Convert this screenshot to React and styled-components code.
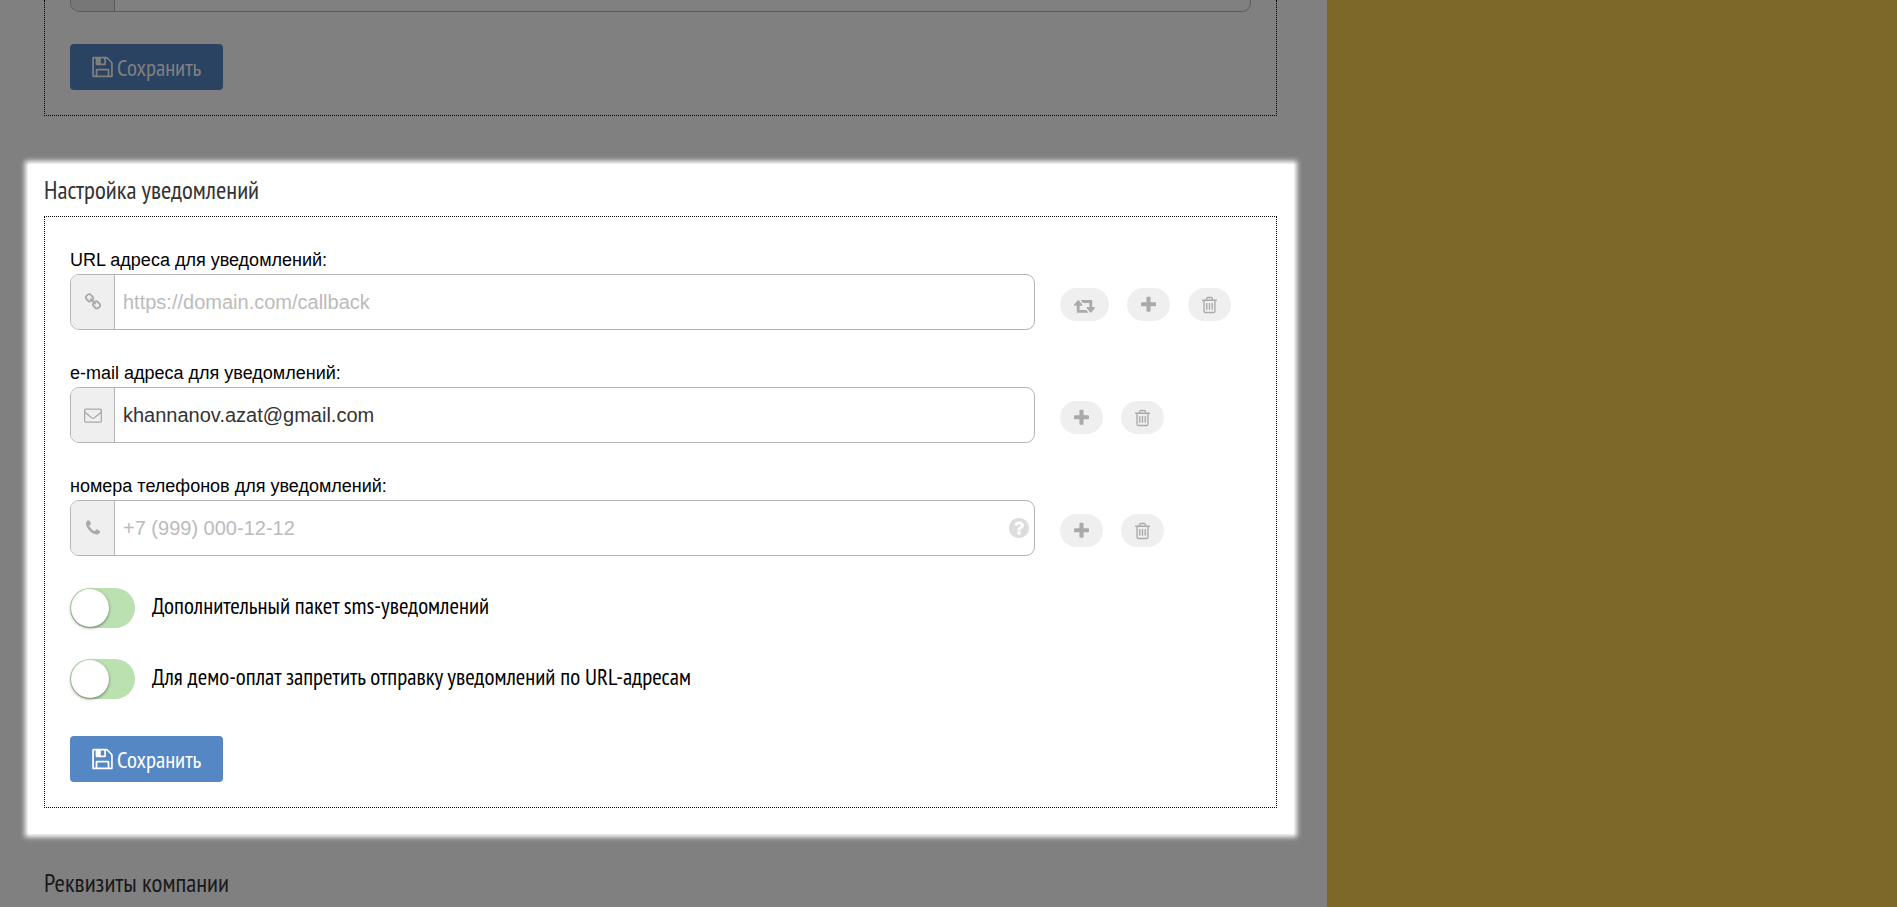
import React, { useState } from 'react'
import styled, { createGlobalStyle } from 'styled-components'

const narrow = "'PT Sans Narrow', 'Liberation Sans Narrow', 'Open Sans', sans-serif"
const regular = "Arial, 'Liberation Sans', sans-serif"

const icons = {
    save: {
        box: '128 0 1536 1792',
        path: 'M512 1536h768v-384h-768v384zm896 0h128v-896q0-14-10-38.5t-20-34.5l-281-281q-10-10-34-20t-39-10v416q0 40-28 68t-68 28h-576q-40 0-68-28t-28-68v-416h-128v1280h128v-416q0-40 28-68t68-28h832q40 0 68 28t28 68v416zm-384-928v-320q0-13-9.5-22.5t-22.5-9.5h-192q-13 0-22.5 9.5t-9.5 22.5v320q0 13 9.5 22.5t22.5 9.5h192q13 0 22.5-9.5t9.5-22.5zm640 32v928q0 40-28 68t-68 28h-1344q-40 0-68-28t-28-68v-1344q0-40 28-68t68-28h928q40 0 88 20t76 48l280 280q28 28 48 76t20 88z',
    },
    link: {
        box: '0 0 1792 1792',
        path: 'M1520 1216q0-40-28-68l-208-208q-28-28-68-28-42 0-72 32 3 3 19 18.5t21.5 21.5 15 19 13 25.5 3.5 27.5q0 40-28 68t-68 28q-15 0-27.5-3.5t-25.5-13-19-15-21.5-21.5-18.5-19q-33 31-33 73 0 40 28 68l206 207q27 27 68 27 40 0 68-26l147-146q28-28 28-67zm-703-705q0-40-28-68l-206-207q-28-28-68-28-39 0-68 27l-147 146q-28 28-28 67 0 40 28 68l208 208q27 27 68 27 42 0 72-31-3-3-19-18.5t-21.5-21.5-15-19-13-25.5-3.5-27.5q0-40 28-68t68-28q15 0 27.5 3.5t25.5 13 19 15 21.5 21.5 18.5 19q33-31 33-73zm895 705q0 120-85 203l-147 146q-83 83-203 83-121 0-204-85l-206-207q-83-83-83-203 0-123 88-209l-88-88q-86 88-208 88-120 0-204-84l-208-208q-84-84-84-204t85-203l147-146q83-83 203-83 121 0 204 85l206 207q83 83 83 203 0 123-88 209l88 88q86-88 208-88 120 0 204 84l208 208q84 84 84 204z',
    },
    mail: {
        box: '0 0 1792 1792',
        path: 'M1664 1504v-768q-32 36-69 66-268 206-426 338-51 43-83 67t-86.5 48.5-102.5 24.5h-2q-48 0-102.5-24.5t-86.5-48.5-83-67q-158-132-426-338-37-30-69-66v768q0 13 9.5 22.5t22.5 9.5h1472q13 0 22.5-9.5t9.5-22.5zm0-1051v-24.5l-.5-13-3-12.5-5.5-9-9-7.5-14-2.5h-1472q-13 0-22.5 9.5t-9.5 22.5q0 168 147 284 193 152 401 317 6 5 35 29.5t46 37.5 44.5 31.5 50.5 27.5 43 9h2q20 0 43-9t50.5-27.5 44.5-31.5 46-37.5 35-29.5q208-165 401-317 54-43 100.5-115.5t46.5-131.5zm128-37v1088q0 66-47 113t-113 47h-1472q-66 0-113-47t-47-113v-1088q0-66 47-113t113-47h1472q66 0 113 47t47 113z',
    },
    phone: {
        box: '0 0 1792 1792',
        path: 'M1600 1240q0 27-10 70.5t-21 68.5q-21 50-122 106-94 51-186 51-27 0-52.5-3.5t-57.5-12.5-47.5-14.5-55.5-20.5-49-18q-98-35-175-83-128-79-264.5-215.5t-215.5-264.5q-48-77-83-175-3-9-18-49t-20.5-55.5-14.5-47.5-12.5-57.5-3.5-52.5q0-92 51-186 56-101 106-122 25-11 68.5-21t70.5-10q14 0 21 3 18 6 53 76 11 19 30 54t35 63.5 31 53.5q3 4 17.5 25t21.5 35.5 7 28.5q0 20-28.5 50t-62 55-62 53-28.5 46q0 9 5 22.5t8.5 20.5 14 24 11.5 19q76 137 174 235t235 174q2 1 19 11.5t24 14 20.5 8.5 22.5 5q18 0 46-28.5t53-62 55-62 50-28.5q14 0 28.5 7t35.5 21.5 25 17.5q25 15 53.5 31t63.5 35 54 30q70 35 76 53 3 7 3 21z',
    },
    retweet: {
        box: '-64 0 1920 1792',
        path: 'M1216 1568q0 13-9.5 22.5t-22.5 9.5h-960q-8 0-13.5-2t-9-7-5.5-8-3-11.5-1-11.5v-600h-192q-26 0-45-19t-19-45q0-24 15-41l320-384q19-22 49-22t49 22l320 384q15 17 15 41 0 26-19 45t-45 19h-192v384h576q16 0 25 11l160 192q7 10 7 21zm640-416q0 24-15 41l-320 384q-20 23-49 23t-49-23l-320-384q-15-17-15-41 0-26 19-45t45-19h192v-384h-576q-16 0-25-12l-160-192q-7-9-7-20 0-13 9.5-22.5t22.5-9.5h960q8 0 13.5 2t9 7 5.5 8 3 11.5 1 11.5v600h192q26 0 45 19t19 45z',
    },
    plus: {
        box: '192 0 1408 1792',
        path: 'M1600 736v192q0 40-28 68t-68 28h-416v416q0 40-28 68t-68 28h-192q-40 0-68-28t-28-68v-416h-416q-40 0-68-28t-28-68v-192q0-40 28-68t68-28h416v-416q0-40 28-68t68-28h192q40 0 68 28t28 68v416h416q40 0 68 28t28 68z',
    },
    trash: {
        box: '192 0 1408 1792',
        path: 'M704 736v576q0 14-9 23t-23 9h-64q-14 0-23-9t-9-23v-576q0-14 9-23t23-9h64q14 0 23 9t9 23zm256 0v576q0 14-9 23t-23 9h-64q-14 0-23-9t-9-23v-576q0-14 9-23t23-9h64q14 0 23 9t9 23zm256 0v576q0 14-9 23t-23 9h-64q-14 0-23-9t-9-23v-576q0-14 9-23t23-9h64q14 0 23 9t9 23zm128 724v-948h-896v948q0 22 7 40.5t14.5 27 10.5 8.5h832q3 0 10.5-8.5t14.5-27 7-40.5zm-672-1076h448l-48-117q-7-9-17-11h-317q-10 2-17 11zm928 32v64q0 14-9 23t-23 9h-96v948q0 83-47 143.5t-113 60.5h-832q-66 0-113-58.5t-47-141.5v-952h-96q-14 0-23-9t-9-23v-64q0-14 9-23t23-9h309l70-167q15-37 54-63t79-26h320q40 0 79 26t54 63l70 167h309q14 0 23 9t9 23z',
    },
    question: {
        box: '128 128 1536 1536',
        path: 'M1024 1376v-192q0-14-9-23t-23-9h-192q-14 0-23 9t-9 23v192q0 14 9 23t23 9h192q14 0 23-9t9-23zm256-672q0-88-55.5-163t-138.5-116-170-41q-243 0-371 213-15 24 8 42l132 100q7 6 19 6 16 0 25-12 53-68 86-92 34-24 86-24 48 0 85.5 26t37.5 59q0 38-20 61t-68 45q-63 28-115.5 86.5t-52.5 125.5v36q0 14 9 23t23 9h192q14 0 23-9t9-23q0-19 21.5-49.5t54.5-49.5q32-18 49-28.5t46-35 44.5-48 28-60.5 12.5-81zm384 192q0 209-103 385.5t-279.5 279.5-385.5 103-385.5-103-279.5-279.5-103-385.5 103-385.5 279.5-279.5 385.5-103 385.5 103 279.5 279.5 103 385.5z',
    },
}

function Icon({name, width, height}) {
    return (
        <svg viewBox={icons[name].box} width={width} height={height} fill="currentColor" aria-hidden="true">
            <path d={icons[name].path}/>
        </svg>
    )
}

const actionTypes = {
    test: { icon: 'retweet', width: 21, title: 'Проверить' },
    add: { icon: 'plus', width: 15, title: 'Добавить' },
    remove: { icon: 'trash', width: 15, title: 'Удалить' },
}

function Field({id, label, icon, type, placeholder, initial = '', actions, hint}) {

    const [value, setValue] = useState(initial);

    return (
        <FieldStyles>
            <label htmlFor={id}>{label}</label>
            <FieldRow>
                <InputGroup>
                    <Addon><Icon name={icon} width={18} height={18}/></Addon>
                    <input id={id} type={type} placeholder={placeholder} value={value} onChange={e => setValue(e.target.value)}/>
                    {hint && <Hint><Icon name="question" width={20} height={20}/></Hint>}
                </InputGroup>
                <Actions>
                    {actions.map(name => (
                        <ActionButton key={name} type="button" aria-label={actionTypes[name].title}>
                            <Icon name={actionTypes[name].icon} width={actionTypes[name].width} height={20}/>
                        </ActionButton>
                    ))}
                </Actions>
            </FieldRow>
        </FieldStyles>
    )
}

function Toggle({children}) {

    const [checked, setChecked] = useState(false);

    return (
        <ToggleStyles>
            <Switch type="checkbox" checked={checked} onChange={() => setChecked(!checked)}/>
            <span>{children}</span>
        </ToggleStyles>
    )
}

function SaveButton({dimmed}) {
    return (
        <SaveButtonStyles type="button" $dimmed={dimmed}>
            <Icon name="save" width={21} height={24}/>
            Сохранить
        </SaveButtonStyles>
    )
}

export default function App() {
    return (
        <Page>
            <GlobalStyle/>
            <Content>
                <Section>
                    <Frame $cut>
                        <InputTail><Addon $dimmed/></InputTail>
                        <SaveButton dimmed/>
                    </Frame>
                </Section>

                <Highlight>
                    <Title>Настройка уведомлений</Title>
                    <Frame>
                        <Fields>
                            <Field id="url" label="URL адреса для уведомлений:" icon="link" type="url"
                                placeholder="https://domain.com/callback" actions={['test', 'add', 'remove']}/>
                            <Field id="email" label="e-mail адреса для уведомлений:" icon="mail" type="email"
                                initial="khannanov.azat@gmail.com" actions={['add', 'remove']}/>
                            <Field id="phone" label="номера телефонов для уведомлений:" icon="phone" type="tel"
                                placeholder="+7 (999) 000-12-12" actions={['add', 'remove']} hint/>
                        </Fields>
                        <Toggles>
                            <Toggle>Дополнительный пакет sms-уведомлений</Toggle>
                            <Toggle>Для демо-оплат запретить отправку уведомлений по URL-адресам</Toggle>
                        </Toggles>
                        <SaveButton/>
                    </Frame>
                </Highlight>

                <Section>
                    <Title $dimmed>Реквизиты компании</Title>
                </Section>
            </Content>
            <SidePanel/>
        </Page>
    )
}

const GlobalStyle = createGlobalStyle`

*{
    box-sizing: border-box;
}

body{
    margin: 0;
    background: #808080;
    font-family: ${regular};
}

input, button{
    font-family: inherit;
}

svg{
    display: block;
    flex-shrink: 0;
}

`

const Page = styled.div`
    display: flex;
    height: 100vh;
    overflow: hidden;
`

const Content = styled.main`
    flex: 1;
    min-width: 0;
`

const SidePanel = styled.aside`
    flex: 0 0 570px;
    background: #7d682a;
`

const Section = styled.section`
    padding: 0 50px 0 44px;
`

const Highlight = styled.section`
    margin: 48px 33px 23px 28px;
    padding: 0 17px 26px 16px;
    background: #fff;
    box-shadow: 0 0 5px 3px #fff;
`

const Title = styled.h2`
    height: 52px;
    margin: 0;
    padding-top: 8px;
    font-family: ${narrow};
    font-size: 25px;
    font-weight: 400;
    line-height: 36px;
    color: ${props => props.$dimmed ? '#191919' : '#333'};
`

const Frame = styled.div`
    padding: ${props => props.$cut ? '0 25px 25px' : '25px'};
    border: 1px dotted #000;
    border-top-width: ${props => props.$cut ? '0' : '1px'};
`

const Fields = styled.div`
    display: flex;
    flex-direction: column;
    gap: 25px;
`

const FieldStyles = styled.div`

label{
    display: block;
    padding-top: 4px;
    font-size: 18px;
    line-height: 28px;
    color: #000;
}

`

const FieldRow = styled.div`
    display: grid;
    grid-template-columns: 1fr 191px;
    column-gap: 25px;
`

const InputGroup = styled.div`

display: flex;
height: 56px;
border: 1px solid #b4b4b4;
border-radius: 9px;
overflow: hidden;
background: #fff;

input{
    flex: 1;
    min-width: 0;
    padding: 0 8px;
    border: 0;
    outline: 0;
    background: none;
    font-size: 20px;
    color: #333;
}

input::placeholder{
    color: #bbb;
    opacity: 1;
}

`

const Addon = styled.span`
    display: flex;
    align-items: center;
    justify-content: center;
    width: 44px;
    background: ${props => props.$dimmed ? '#777' : '#efefef'};
    border-right: 1px solid ${props => props.$dimmed ? '#5b5b5b' : '#b4b4b4'};
    color: #aaa;
`

const InputTail = styled.div`
    display: flex;
    height: 12px;
    margin-bottom: 32px;
    border: 1px solid #5b5b5b;
    border-top: 0;
    border-radius: 0 0 9px 9px;
    overflow: hidden;
`

const Hint = styled.span`
    display: flex;
    align-items: center;
    padding-right: 5px;
    color: #dcdcdc;
`

const Actions = styled.div`
    display: flex;
    align-items: flex-start;
    gap: 18px;
    padding-top: 14px;
`

const ActionButton = styled.button`
    display: flex;
    align-items: center;
    height: 33px;
    padding: 0 14px;
    border: 0;
    border-radius: 17px;
    background: #efefef;
    color: #aaa;
    cursor: pointer;
`

const Toggles = styled.div`
    display: flex;
    flex-direction: column;
    gap: 31px;
    margin: 32px 0 37px;
`

const ToggleStyles = styled.label`

display: flex;
align-items: center;
gap: 17px;
height: 40px;
font-family: ${narrow};
font-size: 23px;
line-height: 28px;
color: #000;
cursor: pointer;

span{
    padding-bottom: 5px;
}

`

const Switch = styled.input`

appearance: none;
display: flex;
flex-shrink: 0;
width: 65px;
height: 40px;
margin: 0;
padding: 1px;
border-radius: 20px;
background: ${props => props.checked ? '#6cc04f' : '#bbe1b0'};
justify-content: ${props => props.checked ? 'flex-end' : 'flex-start'};
cursor: pointer;

&::before{
    content: '';
    width: 38px;
    height: 38px;
    border-radius: 50%;
    background: #fff;
    box-shadow: 0 1px 3px rgba(0, 0, 0, 0.5);
}

`

const SaveButtonStyles = styled.button`
    display: flex;
    align-items: center;
    gap: 4px;
    height: 46px;
    padding: 0 22px;
    border: 0;
    border-radius: 4px;
    background: ${props => props.$dimmed ? '#2a4362' : '#5487c4'};
    color: ${props => props.$dimmed ? '#808080' : '#fff'};
    font-family: ${narrow};
    font-size: 23px;
    cursor: pointer;
`
